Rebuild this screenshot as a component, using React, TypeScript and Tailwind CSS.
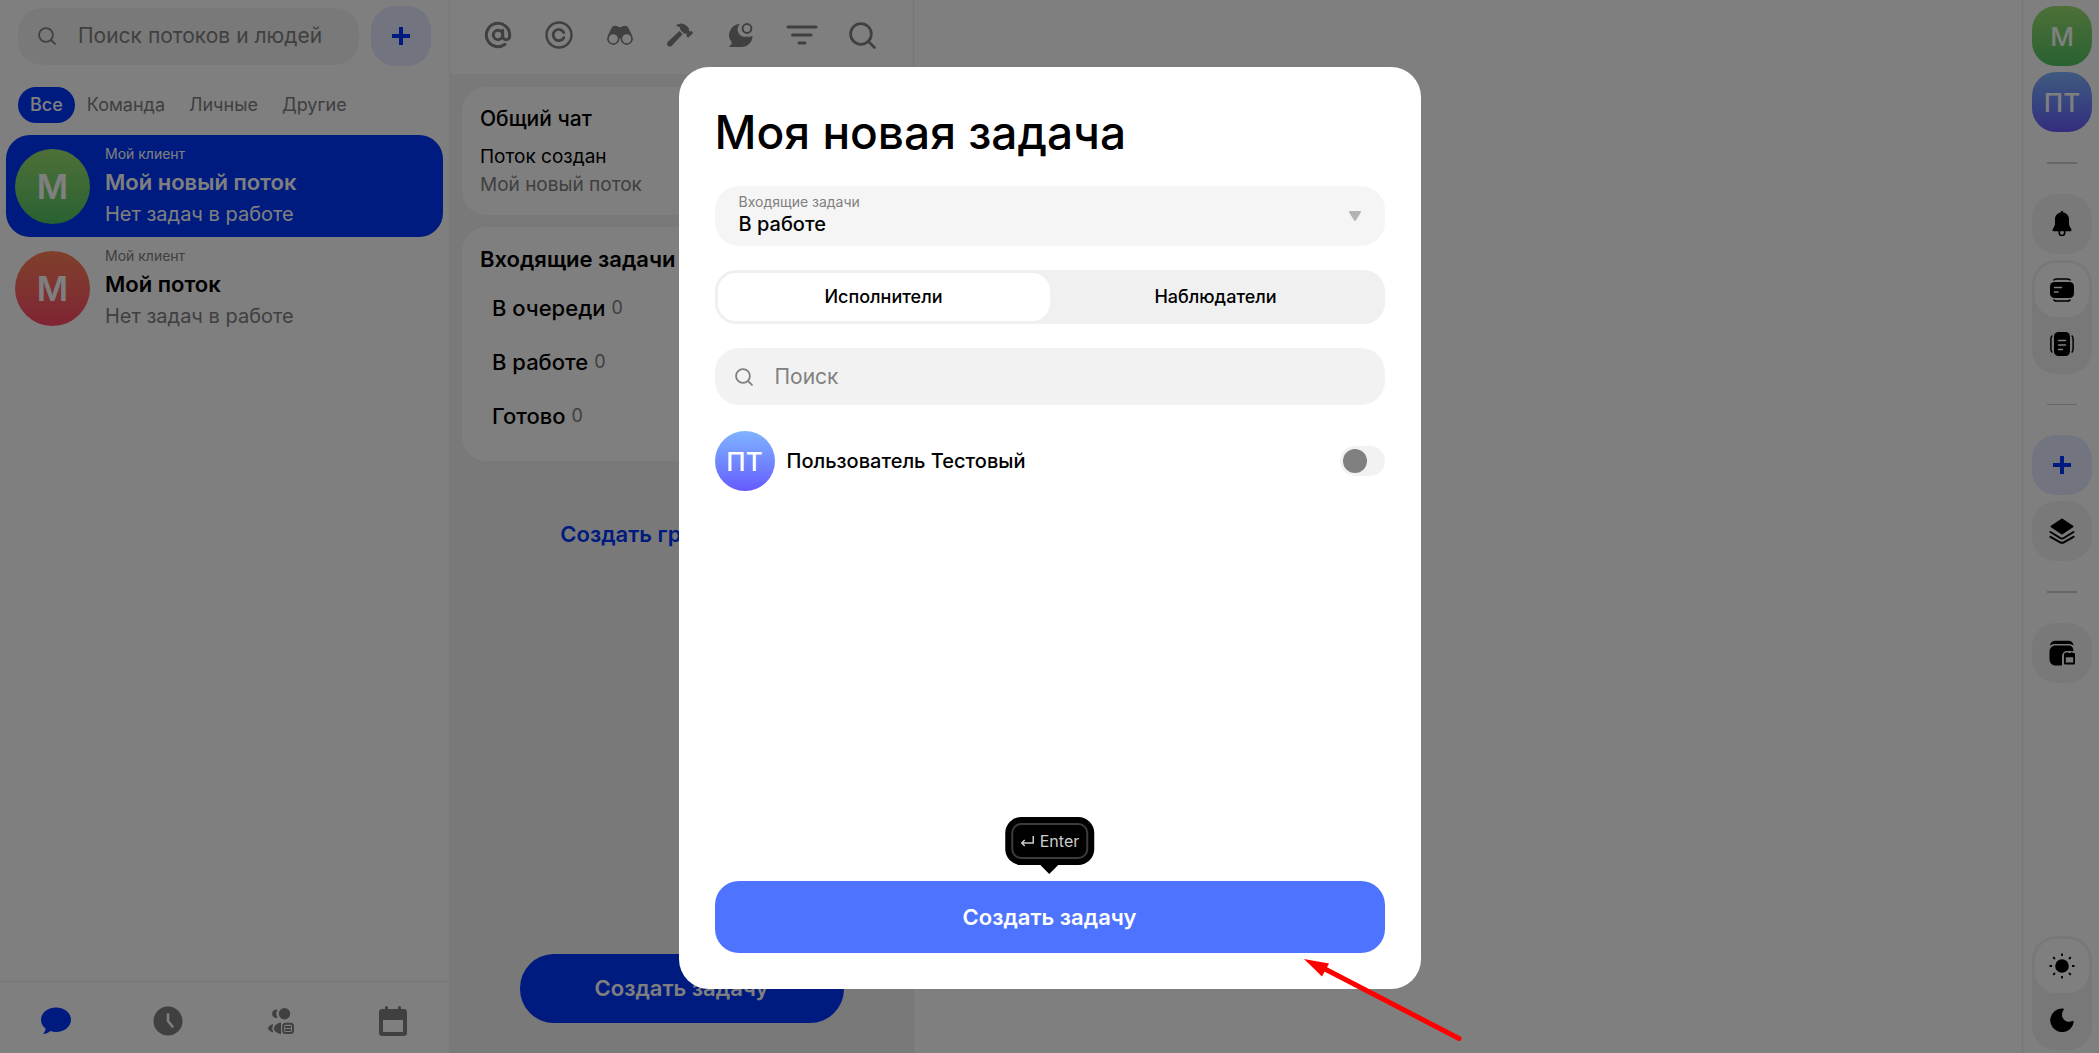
import { ReactNode } from 'react';
import { AtSign } from 'lucide-react';
import { FaHammer } from 'react-icons/fa';

const filters = ['Все', 'Команда', 'Личные', 'Другие'];

const threads = [
  { id: 1, client: 'Мой клиент', name: 'Мой новый поток', status: 'Нет задач в работе', active: true, color: 'from-[#9be070] to-[#4fc463]' },
  { id: 2, client: 'Мой клиент', name: 'Мой поток', status: 'Нет задач в работе', active: false, color: 'from-[#ff8055] to-[#ff4668]' },
];

const stages = [
  { name: 'В очереди', count: 0 },
  { name: 'В работе', count: 0 },
  { name: 'Готово', count: 0 },
];

function SearchIcon({ className }: { className: string }) {
  return (
    <svg viewBox="0 0 26 26" fill="none" stroke="currentColor" strokeWidth="2.6" strokeLinecap="round" className={className}>
      <circle cx="11.5" cy="11.5" r="10" />
      <path d="M19 19l5.500 5.500" />
    </svg>
  );
}

function PlusIcon() {
  return (
    <svg viewBox="0 0 18 18" className="size-[18px]" fill="none" stroke="#0036ff" strokeWidth="4">
      <path d="M9 0v18M0 9h18" />
    </svg>
  );
}

function CopyrightIcon() {
  return (
    <svg viewBox="0 0 28 28" className="size-7" fill="none" stroke="currentColor" strokeLinecap="round">
      <circle cx="14" cy="14" r="12.500" strokeWidth="2.400" />
      <path d="M18.800 11.500A5.600 5.600 0 1 0 18.800 16.500" strokeWidth="2.800" />
    </svg>
  );
}

function BinocularsIcon() {
  return (
    <svg viewBox="0 0 26 20" className="w-[26px]" fill="currentColor">
      <path d="M5 2.2C6 .6 9.6.2 10.800 1.600c.5.6 1 .6 2.200.6s1.700 0 2.200-.6C16.400.2 20 .6 21 2.200c1.600 2.600 2.800 5.200 3.800 8.300L14 13.500h-2L1.200 10.500C2.200 7.400 3.400 4.800 5 2.200z" />
      <circle cx="6.300" cy="13.700" r="6.200" />
      <circle cx="19.700" cy="13.700" r="6.200" />
      <circle cx="6.300" cy="13.700" r="4.500" fill="#fff" />
      <circle cx="19.700" cy="13.700" r="4.500" fill="#fff" />
    </svg>
  );
}

function ChatStatusIcon() {
  return (
    <svg viewBox="0 0 24 24" className="size-6" fill="currentColor">
      <path d="M11 .9A11.300 11.300 0 0 0 2.800 19.500c.1 1.500-.9 2.500-2.300 3.500-.4.400-.2 1 .3 1H12c6.800 0 11.500-4.700 11.500-11-2 .8-4 .9-6 .4A7.300 7.300 0 0 1 11 .9z" />
      <circle cx="18" cy="5.500" r="4.400" fill="none" stroke="currentColor" strokeWidth="2" />
    </svg>
  );
}

function FilterIcon() {
  return (
    <svg viewBox="0 0 32 20" className="w-8" fill="none" stroke="currentColor" strokeWidth="3" strokeLinecap="round">
      <path d="M2 2h28M6.500 10h18.500M13 18h6" />
    </svg>
  );
}

function ChatIcon() {
  return (
    <svg viewBox="0 0 30 28" className="w-[30px]" fill="currentColor">
      <path d="M15 .5c8.300 0 15 5.500 15 12.300S23.300 25 15 25c-2 0-3.900-.3-5.600-.9-1.700 1.500-3.900 2.800-6.200 2.800-.7 0-.8-.6-.4-1.100 1.100-1.200 1.700-2.700 1.800-4.100C1.700 19.400 0 16.300 0 12.800 0 6 6.700.5 15 .5z" />
    </svg>
  );
}

function ClockIcon() {
  return (
    <svg viewBox="0 0 30 30" className="size-[30px]">
      <circle cx="15" cy="15" r="14.500" fill="currentColor" />
      <path d="M15 8.500V15l4.500 5.500" fill="none" stroke="#fff" strokeWidth="2.600" strokeLinecap="round" strokeLinejoin="round" />
    </svg>
  );
}

function PeopleIcon() {
  return (
    <svg viewBox="0 0 26 26" className="size-[26px]" fill="currentColor">
      <path d="M9.800 1.800A4.200 4.200 0 1 0 9.800 9.600 6.500 6.500 0 0 1 9.800 1.800z" />
      <circle cx="16.500" cy="5.700" r="5.700" />
      <path d="M5.500 16C2.300 16.800 0 18.600 0 20.300s2.300 3.500 5.500 4.300a8.500 8.500 0 0 1 0-8.600z" />
      <path d="M13 14.500c-4.300.6-7 3.200-7 5.800s2.700 5.200 7 5.700z" />
      <rect x="15.200" y="15.700" width="9.800" height="9.300" rx="2.500" fill="none" stroke="currentColor" strokeWidth="2" />
      <path d="M17 19h6M17 22h6" stroke="currentColor" strokeWidth="1.800" />
    </svg>
  );
}

function CalendarIcon() {
  return (
    <svg viewBox="0 0 28 30" className="w-7" fill="currentColor">
      <path fillRule="evenodd" d="M3 3h3V1.500a1.500 1.500 0 0 1 3 0V3h10V1.500a1.500 1.500 0 0 1 3 0V3h3a3 3 0 0 1 3 3v21a3 3 0 0 1-3 3H3a3 3 0 0 1-3-3V6a3 3 0 0 1 3-3zM4 14v12h20V14z" />
    </svg>
  );
}

function BellIcon() {
  return (
    <svg viewBox="0 0 20 26" className="w-5" fill="currentColor">
      <path d="M10 0c.8 0 1.300.6 1.300 1.400C14.600 2 17 4.600 17 8v5c0 2.500 2.500 4.500 2.500 6 0 .8-.5 1.300-1.300 1.300H1.800C1 20.300.5 19.800.5 19 .5 17.500 3 15.500 3 13V8c0-3.400 2.400-6 5.700-6.600C8.700.6 9.200 0 10 0z" />
      <path d="M7.300 20v1.800a2.700 2.700 0 0 0 5.400 0V20" fill="none" stroke="currentColor" strokeWidth="1.700" />
    </svg>
  );
}

function CardsIcon() {
  return (
    <svg viewBox="0 0 24 24" className="size-6" fill="none" stroke="currentColor" strokeWidth="1.500" strokeLinecap="round">
      <rect x="0" y="4" width="24" height="16" rx="4.500" fill="currentColor" stroke="none" />
      <path d="M4 1.900C5 1 6 .9 7 .9h10c1 0 2 .1 3 1M4 22.100c1 .9 2 1 3 1h10c1 0 2-.1 3-1" />
      <path d="M4.500 9.500h7M4.500 14h3.500" stroke="#fff" />
    </svg>
  );
}

function ColumnsIcon() {
  return (
    <svg viewBox="0 0 24 24" className="size-6" fill="none" stroke="currentColor" strokeWidth="1.500" strokeLinecap="round">
      <rect x="4" y="0" width="16" height="24" rx="4.500" fill="currentColor" stroke="none" />
      <path d="M1.900 4C1 5 .9 6 .9 7v10c0 1 .1 2 1 3M22.100 4c.9 1 1 2 1 3v10c0 1-.1 2-1 3" />
      <path d="M8.500 8.500h7M8.500 13h7M8.500 17.500h4" stroke="#fff" />
    </svg>
  );
}

function LayersIcon() {
  return (
    <svg viewBox="0 0 26 26" className="size-[26px]" fill="none" stroke="currentColor" strokeWidth="2" strokeLinecap="round" strokeLinejoin="round">
      <path d="M13 1.500L23.500 8.500 13 15.500 2.500 8.500z" fill="currentColor" />
      <path d="M1.500 14l9.700 6c1.200.7 2.400.7 3.600 0l9.700-6M1.500 18.800l9.700 5.500c1.200.7 2.400.7 3.600 0l9.700-5.500" />
    </svg>
  );
}

function WalletIcon() {
  return (
    <svg viewBox="0 0 26 26" className="size-[26px]" fill="currentColor">
      <path d="M1 5.500C1.500 2 4 .7 7 .7h12c3 0 5 1.300 5.500 4.800C23 4.300 21 4 19 4H7c-2 0-4.500.3-6 1.500z" />
      <path d="M7 5.500h12c3.500 0 5.500 2 5.500 5.500H18a5 5 0 0 0-5 5v9.500H7c-4 0-6.500-2.500-6.500-6.500v-7C.5 8 3 5.500 7 5.500z" />
      <path fillRule="evenodd" d="M16.300 13h1v-.8h1.700v.8h3v-.8h1.700v.8h1c.7 0 1.300.6 1.300 1.300v8.900c0 .7-.6 1.300-1.300 1.300h-8.400c-.7 0-1.300-.6-1.300-1.300v-8.900c0-.7.6-1.300 1.300-1.300zM16.800 17.200v5.300h7.400v-5.300z" />
    </svg>
  );
}

function SunIcon() {
  return (
    <svg viewBox="0 0 26 26" className="size-[26px]" fill="none" stroke="currentColor" strokeWidth="1.800">
      <circle cx="13" cy="13" r="6.800" fill="currentColor" stroke="none" />
      <path d="M13 .5V3M13 23v2.500M.5 13H3M23 13h2.500M4.200 4.200L6 6M20 20l1.800 1.800M4.200 21.800L6 20M20 6l1.800-1.800" />
    </svg>
  );
}

function MoonIcon() {
  return (
    <svg viewBox="0 0 24 24" className="size-6" fill="currentColor">
      <path d="M12.500.5c1.200-.1 1.700.4 1.200 1.200C11.300 5 11.500 9 13.800 11.500s5.700 3 8.600 1.600c.9-.4 1.500 0 1.300.9A11.800 11.800 0 1 1 12.500.5z" />
    </svg>
  );
}

function RailButton({ label, className = 'bg-[#f2f2f2]', children }: { label: string; className?: string; children: ReactNode }) {
  return (
    <button aria-label={label} className={`flex size-[60px] shrink-0 items-center justify-center rounded-3xl ${className}`}>
      {children}
    </button>
  );
}

function RailSwitch({ labels, children }: { labels: [string, string]; children: [ReactNode, ReactNode] }) {
  return (
    <div className="flex w-[60px] shrink-0 flex-col rounded-3xl bg-[#f0f0f0] p-[3px]">
      <button aria-label={labels[0]} className="flex size-[54px] items-center justify-center rounded-[21px] bg-white">{children[0]}</button>
      <button aria-label={labels[1]} className="flex size-[54px] items-center justify-center">{children[1]}</button>
    </div>
  );
}

function Sidebar() {
  return (
    <aside className="flex w-[450px] shrink-0 flex-col border-r border-[#f0f0f0] bg-white">
      <div className="flex items-center gap-3 px-[18px] pt-1.5">
        <label className="flex h-[57px] min-w-0 flex-1 items-center gap-[22px] rounded-3xl bg-[#f2f2f2] px-5 text-[#808080]">
          <SearchIcon className="size-[18px] shrink-0" />
          <input placeholder="Поиск потоков и людей" className="w-full min-w-0 text-[21px] outline-none placeholder:text-[#808080]" />
        </label>
        <button aria-label="Создать" className="flex size-[60px] items-center justify-center rounded-3xl bg-[#e5eaff]">
          <PlusIcon />
        </button>
      </div>

      <div className="mt-[21px] flex px-[18px]">
        {filters.map((f, i) => (
          <button
            key={f}
            className={`h-9 rounded-[18px] px-3 text-lg ${i === 0 ? 'bg-[#0036ff] font-medium text-white' : 'text-[#808080]'}`}
          >
            {f}
          </button>
        ))}
      </div>

      <div className="mt-3 flex-1 px-1.5">
        {threads.map((t) => (
          <a
            key={t.id}
            href="#"
            className={`flex h-[102px] items-center gap-[15px] rounded-3xl px-[9px] ${t.active ? 'bg-[#0036ff] text-white' : 'text-[#808080]'}`}
          >
            <span className={`flex size-[75px] shrink-0 items-center justify-center rounded-full bg-linear-to-b text-[34px] font-semibold text-white ${t.color}`}>
              {t.name[0]}
            </span>
            <span className="flex flex-col">
              <span className="text-sm leading-6">{t.client}</span>
              <span className={`text-[22px] leading-8 font-semibold ${t.active ? '' : 'text-black'}`}>{t.name}</span>
              <span className="text-xl leading-8">{t.status}</span>
            </span>
          </a>
        ))}
      </div>

      <nav className="grid h-[72px] grid-cols-4 border-t border-[#ececec] pt-1.5 text-[#808080]">
        <button aria-label="Чаты" className="flex items-center justify-center text-[#0036ff]"><ChatIcon /></button>
        <button aria-label="Время" className="flex items-center justify-center"><ClockIcon /></button>
        <button aria-label="Команда" className="flex items-center justify-center"><PeopleIcon /></button>
        <button aria-label="Календарь" className="flex items-center justify-center"><CalendarIcon /></button>
      </nav>
    </aside>
  );
}

function ThreadColumn() {
  return (
    <section className="flex w-[464px] shrink-0 flex-col border-r border-[#ececec] bg-[#f2f2f2]">
      <div className="grid h-[74px] grid-cols-7 items-center justify-items-center bg-white pr-5 pb-1 pl-[18px] text-[#808080]">
        <button aria-label="Упоминания"><AtSign className="size-7" strokeWidth={2.6} /></button>
        <button aria-label="Авторские"><CopyrightIcon /></button>
        <button aria-label="Наблюдение"><BinocularsIcon /></button>
        <button aria-label="В работе"><FaHammer className="size-[26px]" /></button>
        <button aria-label="Непрочитанные"><ChatStatusIcon /></button>
        <button aria-label="Фильтр"><FilterIcon /></button>
        <button aria-label="Поиск"><SearchIcon className="size-[27px]" /></button>
      </div>

      <div className="flex flex-1 flex-col gap-3 px-3 pt-[13px] pb-[30px]">
        <div className="h-32 rounded-3xl bg-white px-[18px] pt-4">
          <h2 className="text-[21px] leading-8 font-medium">Общий чат</h2>
          <p className="mt-2 text-[19px] leading-7">Поток создан</p>
          <p className="text-[19px] leading-7 text-[#808080]">Мой новый поток</p>
        </div>

        <div className="h-[234px] rounded-3xl bg-white px-[18px] pt-4">
          <h2 className="text-[22px] leading-8 font-semibold">Входящие задачи</h2>
          <ul className="mt-1.5 pl-3">
            {stages.map((s) => (
              <li key={s.name} className="flex h-[54px] items-center gap-1.5 text-[22px] font-medium">
                {s.name} <span className="text-lg font-normal text-[#808080]">{s.count}</span>
              </li>
            ))}
          </ul>
        </div>

        <button className="mt-[45px] text-[22px] leading-8 font-semibold text-[#0036ff]">Создать группу задач</button>

        <button className="mt-auto h-[69px] w-[324px] self-center rounded-[34px] bg-[#0036ff] text-[22px] font-semibold text-white">
          Создать задачу
        </button>
      </div>
    </section>
  );
}

function Rail() {
  return (
    <aside className="flex w-[77px] shrink-0 flex-col border-l border-[#ececec] bg-white pt-1.5 pb-[3px] pl-[9px]">
      <RailButton label="Мой новый поток" className="bg-linear-to-b from-[#9be070] to-[#4fc463] text-[26px] font-medium text-white">М</RailButton>
      <RailButton label="Пользователь Тестовый" className="mt-1.5 bg-linear-to-b from-[#80b3ff] to-[#6659ff] text-[26px] font-medium text-white">ПТ</RailButton>
      <hr className="my-[30px] ml-[15px] w-[30px] border-t-2 border-[#ccc]" />
      <RailButton label="Уведомления"><BellIcon /></RailButton>
      <div className="mt-1.5">
        <RailSwitch labels={['Карточки', 'Колонки']}>
          <CardsIcon />
          <ColumnsIcon />
        </RailSwitch>
      </div>
      <hr className="my-[30px] ml-[15px] w-[30px] border-t border-[#ccc]" />
      <RailButton label="Добавить" className="bg-[#e5eaff]"><PlusIcon /></RailButton>
      <RailButton label="Слои" className="mt-1.5 bg-[#f2f2f2]"><LayersIcon /></RailButton>
      <hr className="my-[30px] ml-[15px] w-[30px] border-t-2 border-[#ccc]" />
      <RailButton label="Архив"><WalletIcon /></RailButton>
      <div className="mt-auto">
        <RailSwitch labels={['Светлая тема', 'Тёмная тема']}>
          <SunIcon />
          <MoonIcon />
        </RailSwitch>
      </div>
    </aside>
  );
}

function PointerArrow() {
  return (
    <svg viewBox="0 0 162 86" className="pointer-events-none absolute -right-[43px] -bottom-[54px] w-[162px]">
      <path d="M23 12L157 81.500" stroke="#f00" strokeWidth="5" strokeLinecap="round" />
      <path d="M2 2L27 6.500 20 19.500z" fill="#f00" />
    </svg>
  );
}

function NewTaskModal() {
  return (
    <div className="fixed inset-0 flex justify-center bg-black/50 pt-[67px] pb-16">
      <div role="dialog" aria-label="Моя новая задача" className="relative flex w-full max-w-[742px] flex-col rounded-[30px] bg-white px-9 pt-8 pb-9">
        <h1 className="text-[46px] leading-[66px] font-medium">Моя новая задача</h1>

        <div className="relative mt-[21px] h-[60px] shrink-0 rounded-3xl bg-[#f5f5f5]">
          <label htmlFor="stage" className="absolute top-1.5 left-6 text-sm leading-5 text-[#808080]">Входящие задачи</label>
          <select id="stage" defaultValue="В работе" className="h-full w-full appearance-none px-6 pt-4 text-xl font-medium outline-none">
            {stages.map((s) => <option key={s.name}>{s.name}</option>)}
          </select>
          <svg viewBox="0 0 12 10" className="pointer-events-none absolute top-[25px] right-6 w-3" fill="#b3b3b3">
            <path d="M1 0h10c.8 0 1.200.7.8 1.400L7 9.300c-.5.900-1.500.900-2 0L.2 1.400C-.2.700.2 0 1 0z" />
          </svg>
        </div>

        <div className="mt-6 grid h-[54px] shrink-0 grid-cols-2 rounded-[21px] bg-[#f0f0f0] p-[3px] text-lg font-medium">
          <button className="rounded-[18px] bg-white">Исполнители</button>
          <button>Наблюдатели</button>
        </div>

        <label className="mt-6 flex h-[57px] shrink-0 items-center gap-[22px] rounded-3xl bg-[#f2f2f2] px-5 text-[#808080]">
          <SearchIcon className="size-[18px] shrink-0" />
          <input placeholder="Поиск" className="w-full text-[21px] outline-none placeholder:text-[#808080]" />
        </label>

        <label className="mt-[26px] flex items-center gap-3">
          <span className="flex size-[60px] items-center justify-center rounded-full bg-linear-to-b from-[#80b3ff] to-[#6659ff] text-[26px] font-medium text-white">ПТ</span>
          <span className="flex-1 text-xl font-medium">Пользователь Тестовый</span>
          <input
            type="checkbox"
            className="flex h-[30px] w-[45px] appearance-none items-center rounded-[15px] bg-[#f2f2f2] px-[3px] before:size-6 before:rounded-full before:bg-[#808080] checked:justify-end"
          />
        </label>

        <div className="relative mt-auto">
          <div className="absolute bottom-full left-1/2 mb-4 -translate-x-1/2 rounded-2xl bg-black p-1.5">
            <kbd className="flex h-9 items-center gap-1.5 rounded-[10px] border-2 border-[#3c3c3c] px-[7px] font-[Inter] text-base text-[#ccc]">
              <svg viewBox="0 0 14 11" className="w-3.5" fill="none" stroke="currentColor" strokeWidth="1.500">
                <path d="M13 0v7H1.500M4.500 4l-3 3 3 3" />
              </svg>
              Enter
            </kbd>
            <svg viewBox="0 0 18 9" className="absolute top-full left-1/2 w-[18px] -translate-x-1/2">
              <path d="M0 0h18L9 9z" />
            </svg>
          </div>
          <button className="h-[72px] w-full rounded-3xl bg-[#4d73ff] text-[22px] font-semibold text-white">Создать задачу</button>
        </div>

        <PointerArrow />
      </div>
    </div>
  );
}

export default function App() {
  return (
    <div className="flex h-screen overflow-hidden bg-white font-[Inter,sans-serif] text-black">
      <Sidebar />
      <ThreadColumn />
      <main className="flex-1" />
      <Rail />
      <NewTaskModal />
    </div>
  );
}
